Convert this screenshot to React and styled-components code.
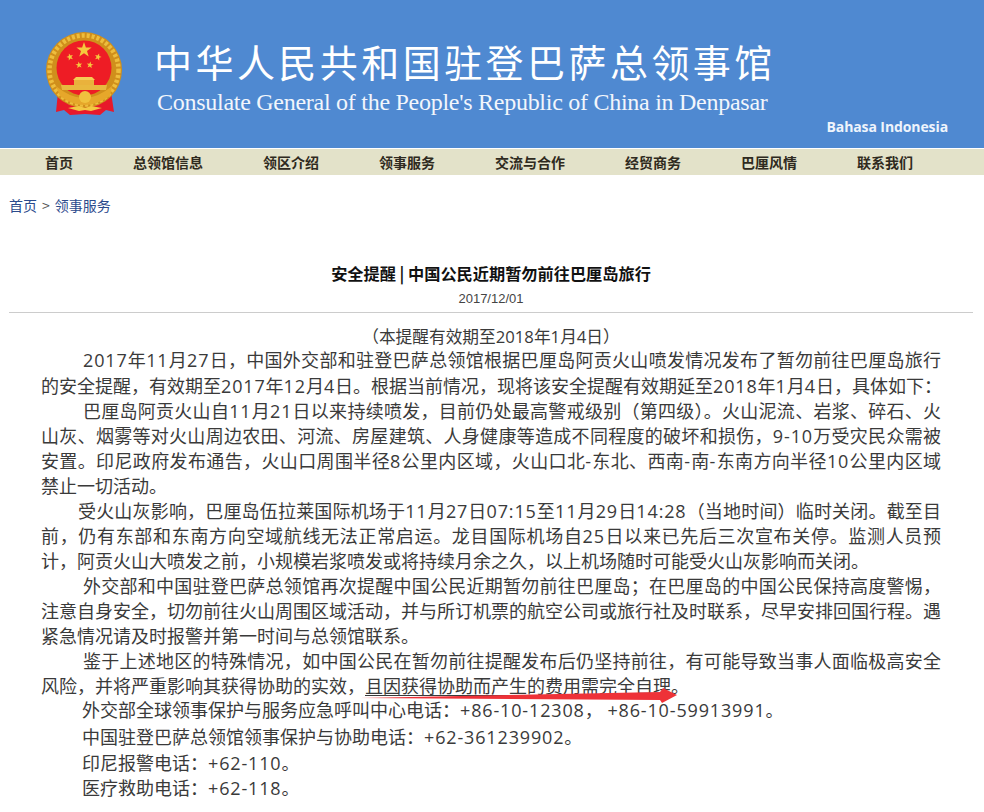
import React from "react";
import styled, { createGlobalStyle } from "styled-components";

const Global = createGlobalStyle`
  html, body { margin: 0; padding: 0; background: #fff; }
  body { font-family: "Liberation Sans", "Noto Sans CJK SC", sans-serif; }
`;
const Page = styled.div`position: relative; width: 984px; height: 812px; overflow: hidden;`;
const Banner = styled.header`
  height: 148px; background: #4f89d1; display: flex; padding-left: 44px; box-sizing: border-box; position: relative;
`;
const Emblem = styled.svg`width: 80px; height: 88px; margin-top: 30px; flex: none;`;
const Titles = styled.div`margin-left: 30px; padding-top: 35px; color: #fff;`;
const CnTitle = styled.div`
  font-family: "Noto Sans CJK SC", sans-serif; font-size: 38px; line-height: 52px; letter-spacing: 3.45px; font-weight: 400; white-space: nowrap;
`;
const EnTitle = styled.div`
  font-family: "Liberation Serif", serif; font-size: 24px; line-height: 30px; letter-spacing: -0.27px; margin-left: 3px; white-space: nowrap; color: #f2f6fc;
`;
const Lang = styled.a`
  position: absolute; right: 36px; bottom: 12px; color: #eef4fc; font-size: 14px; font-weight: 700; line-height: 18px;
  font-family: "Open Sans", sans-serif; letter-spacing: -0.1px;
`;
const Nav = styled.nav`
  margin-top: 1px; height: 26px; background: #e3e2c9; display: flex; gap: 60px; padding-left: 45px; align-items: center;
`;
const NavItem = styled.a`
  font-family: "Noto Sans CJK SC", sans-serif; font-size: 14px; font-weight: 700; color: #2f2a20; line-height: 26px; white-space: nowrap;
`;
const Crumbs = styled.div`
  padding: 20px 0 0 9px; font-size: 14px; line-height: 20px; color: #2b4a8c; font-family: "Noto Sans CJK SC", sans-serif; display: flex; gap: 5px;
`;
const Sep = styled.span`color: #555;`;
const Article = styled.main`padding: 45px 11px 0 9px;`;
const Title = styled.h1`
  margin: 0; text-align: center; font-size: 16.2px; line-height: 26px; font-weight: 700; color: #111; font-family: "Noto Sans CJK SC", sans-serif;
`;
const DateLine = styled.div`text-align: center; font-size: 13px; line-height: 20px; color: #444; margin-top: 3px;`;
const Rule = styled.hr`border: 0; border-top: 1px solid #ccc; margin: 3px 0 0;`;
const Body = styled.div`
  padding: 14px 32px 0 32px; color: #3a3a3a; font-family: "Open Sans", "Noto Sans CJK SC", sans-serif; font-size: 18px;
`;
const Notice = styled.div`text-align: center; font-size: 16.7px; line-height: 20px; color: #3a3a3a;`;
const Para = styled.p`
  margin: ${p => p.$top || 0}px 0 0; line-height: ${p => p.$lh || 25}px;
`;
const Line = styled.span`
  display: block; padding-left: ${p => p.$indent || 0}px;
  text-align: ${p => (p.$last ? "left" : "justify")};
  text-align-last: ${p => (p.$last ? "left" : "justify")};
  white-space: ${p => (p.$last ? "nowrap" : "normal")};
`;
const Num = styled.span`letter-spacing: 0.85px;`;
const Marked = styled.span`text-decoration: underline; text-underline-offset: 2px; text-decoration-thickness: 1px;`;
const Arrow = styled.svg`position: absolute; left: 355px; top: 684px; width: 330px; height: 22px; pointer-events: none;`;

const navItems = ["首页", "总领馆信息", "领区介绍", "领事服务", "交流与合作", "经贸商务", "巴厘风情", "联系我们"];

const paragraphs = [
  { lh: 26, lines: [
    "2017年11月27日，中国外交部和驻登巴萨总领馆根据巴厘岛阿贡火山喷发情况发布了暂勿前往巴厘岛旅行",
    "的安全提醒，有效期至2017年12月4日。根据当前情况，现将该安全提醒有效期延至2018年1月4日，具体如下：",
  ] },
  { lines: [
    "巴厘岛阿贡火山自11月21日以来持续喷发，目前仍处最高警戒级别（第四级）。火山泥流、岩浆、碎石、火",
    "山灰、烟雾等对火山周边农田、河流、房屋建筑、人身健康等造成不同程度的破坏和损伤，9-10万受灾民众需被",
    "安置。印尼政府发布通告，火山口周围半径8公里内区域，火山口北-东北、西南-南-东南方向半径10公里内区域",
    "禁止一切活动。",
  ] },
  { indent: 37, lines: [
    "受火山灰影响，巴厘岛伍拉莱国际机场于11月27日07:15至11月29日14:28（当地时间）临时关闭。截至目",
    "前，仍有东部和东南方向空域航线无法正常启运。龙目国际机场自25日以来已先后三次宣布关停。监测人员预",
    "计，阿贡火山大喷发之前，小规模岩浆喷发或将持续月余之久，以上机场随时可能受火山灰影响而关闭。",
  ] },
  { lines: [
    "外交部和中国驻登巴萨总领馆再次提醒中国公民近期暂勿前往巴厘岛；在巴厘岛的中国公民保持高度警惕，",
    "注意自身安全，切勿前往火山周围区域活动，并与所订机票的航空公司或旅行社及时联系，尽早安排回国行程。遇",
    "紧急情况请及时报警并第一时间与总领馆联系。",
  ] },
  { lines: [
    "鉴于上述地区的特殊情况，如中国公民在暂勿前往提醒发布后仍坚持前往，有可能导致当事人面临极高安全",
    <>风险，并将严重影响其获得协助的实效，<Marked>且因获得协助而产生的费用需完全自理</Marked>。</>,
  ] },
  { indent: 41, top: -1, lines: ["外交部全球领事保护与服务应急呼叫中心电话：+86-10-12308， +86-10-59913991。"] },
  { indent: 41, top: 2, lines: ["中国驻登巴萨总领馆领事保护与协助电话：+62-361239902。"] },
  { indent: 41, top: 1, lines: ["印尼报警电话：+62-110。"] },
  { indent: 41, lines: ["医疗救助电话：+62-118。"] },
];

const spaced = line =>
  typeof line === "string"
    ? line.split(/([0-9+:-]+)/).map((part, i) => (i % 2 ? <Num key={i}>{part}</Num> : part))
    : line;

const star = (cx, cy, r, rot = 0) => {
  const pts = [];
  for (let i = 0; i < 10; i++) {
    const rad = i % 2 ? r * 0.4 : r;
    const a = (Math.PI / 5) * i - Math.PI / 2 + rot;
    pts.push(`${(cx + rad * Math.cos(a)).toFixed(1)},${(cy + rad * Math.sin(a)).toFixed(1)}`);
  }
  return pts.join(" ");
};

const EmblemIcon = () => (
  <Emblem viewBox="0 0 80 88">
    <path d="M14 62 L12 82 L20 80 L26 85 L41 84 L56 85 L62 80 L70 82 L67 62 Z" fill="#e8182a" />
    <circle cx="40" cy="40" r="38" fill="#d08f1c" />
    <circle cx="40" cy="40" r="34.5" fill="none" stroke="#eebd3d" strokeWidth="4.5" strokeDasharray="3 2" />
    <circle cx="40" cy="38" r="27.5" fill="#ee1c25" />
    <polygon points={star(40, 20, 8)} fill="#f5c93d" />
    <polygon points={star(26, 27, 3.6, -0.3)} fill="#f5c93d" />
    <polygon points={star(35, 35, 3.6, -0.15)} fill="#f5c93d" />
    <polygon points={star(46, 35, 3.6, 0.15)} fill="#f5c93d" />
    <polygon points={star(54, 27, 3.6, 0.3)} fill="#f5c93d" />
    <path d="M32 47 L48 47 L51 50 L29 50 Z" fill="#f6cd55" />
    <rect x="30" y="50" width="20" height="5" fill="#e9b23c" />
    <path d="M17 55 L63 55 L62 60 L18 60 Z" fill="#e8b83f" />
    <path d="M12 56 Q40 80 68 56 L66 66 Q40 84 16 66 Z" fill="#e6a72a" />
    <circle cx="41" cy="67" r="6" fill="#f0c23e" />
    <path d="M24 78 L35 76 L41 78 L47 76 L58 78 L47 81 L41 80 L35 81 Z" fill="#f3c843" />
  </Emblem>
);

export default function App() {
  return (
    <Page>
      <Global />
      <Banner>
        <EmblemIcon />
        <Titles>
          <CnTitle>中华人民共和国驻登巴萨总领事馆</CnTitle>
          <EnTitle>Consulate General of the People's Republic of China in Denpasar</EnTitle>
        </Titles>
        <Lang>Bahasa Indonesia</Lang>
      </Banner>
      <Nav>
        {navItems.map(t => <NavItem key={t}>{t}</NavItem>)}
      </Nav>
      <Crumbs>
        <span>首页</span><Sep>&gt;</Sep><span>领事服务</span>
      </Crumbs>
      <Article>
        <Title>安全提醒 | 中国公民近期暂勿前往巴厘岛旅行</Title>
        <DateLine>2017/12/01</DateLine>
        <Rule />
        <Body>
          <Notice>（本提醒有效期至2018年1月4日）</Notice>
          {paragraphs.map((p, i) => (
            <Para key={i} $lh={p.lh} $top={p.top}>
              {p.lines.map((l, j) => (
                <Line key={j} $indent={j === 0 ? (p.indent ?? 42) : 0} $last={j === p.lines.length - 1}>{spaced(l)}</Line>
              ))}
            </Para>
          ))}
        </Body>
      </Article>
      <Arrow viewBox="0 0 330 22">
        <path d="M5 14 L305 8 L308 4 L322 11 L307 19 L305 16 Z" fill="#ee3238" />
      </Arrow>
    </Page>
  );
}
